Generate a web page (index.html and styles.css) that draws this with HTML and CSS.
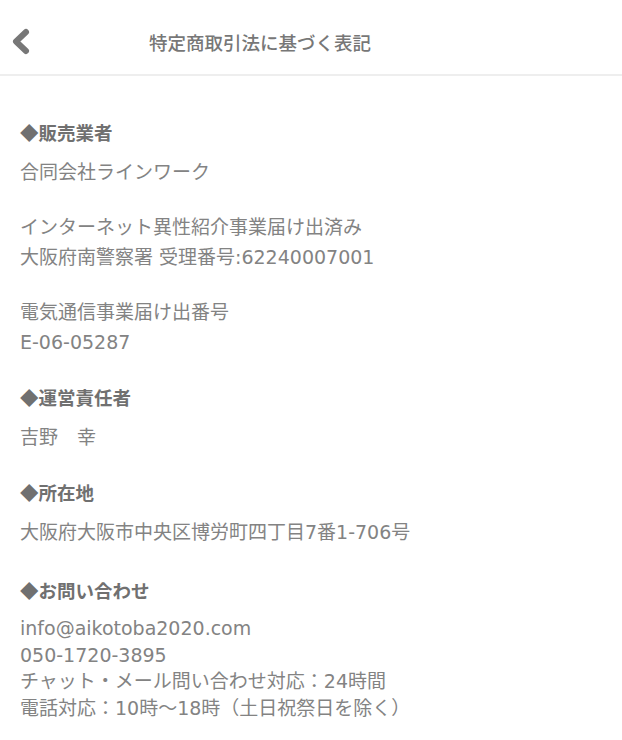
FILE: index.html
```html
<!DOCTYPE html>
<html lang="ja">
<head>
    <meta charset="UTF-8">
    <meta name="viewport" content="width=device-width, initial-scale=1.0">
    <title>特定商取引法に基づく表記</title>
    <link rel="stylesheet" href="styles.css">
</head>
<body>
    <header class="page-header">
        <a class="back-button" href="#">
            <svg width="44" height="74" viewBox="0 0 44 74">
                <polyline points="26,32 16,41.5 26,51" fill="none" stroke="#777" stroke-width="6" stroke-linecap="round" stroke-linejoin="round"/>
            </svg>
        </a>
        <h1 class="page-title">特定商取引法に基づく表記</h1>
    </header>

    <main class="content">
        <section class="block">
            <h2 class="block-title">◆販売業者</h2>
            <p>合同会社ラインワーク</p>
            <p>インターネット異性紹介事業届け出済み<br>大阪府南警察署 受理番号:62240007001</p>
            <p>電気通信事業届け出番号<br>E-06-05287</p>
        </section>

        <section class="block">
            <h2 class="block-title">◆運営責任者</h2>
            <p>吉野　幸</p>
        </section>

        <section class="block">
            <h2 class="block-title">◆所在地</h2>
            <p>大阪府大阪市中央区博労町四丁目7番1-706号</p>
        </section>

        <section class="block">
            <h2 class="block-title">◆お問い合わせ</h2>
            <p class="contact">info@aikotoba2020.com<br>050-1720-3895<br>チャット・メール問い合わせ対応：24時間<br>電話対応：10時〜18時（土日祝祭日を除く）</p>
        </section>
    </main>
</body>
</html>
```

FILE: styles.css
```css
body {
    font-family: "DejaVu Sans", "Noto Sans CJK JP", sans-serif;
    margin: 0;
    padding: 0;
    background: #fff;
    color: #838383;
}

.page-header {
    display: flex;
    align-items: center;
    height: 74px;
    border-bottom: 2px solid #eeeeee;
}

.back-button {
    display: block;
    width: 44px;
    height: 74px;
}

.back-button svg {
    display: block;
}

.page-title {
    margin: 0;
    padding: 10px 0 0 105px;
    font-family: "Noto Sans CJK JP", sans-serif;
    font-size: 18.5px;
    font-weight: 500;
    color: #777;
    line-height: 30px;
}

.content {
    padding: 41px 20px 0;
}

.block + .block {
    margin-top: 25px;
}

.block:last-child {
    margin-top: 28px;
}

.block-title {
    margin: 0 0 10px;
    font-family: "Noto Sans CJK JP", sans-serif;
    font-size: 18.5px;
    font-weight: bold;
    line-height: 30px;
    color: #707070;
}

.block p {
    margin: 0;
    font-size: 19px;
    line-height: 30px;
}

.block p + p {
    margin-top: 25px;
}

.block p.contact {
    margin-top: 1px;
    line-height: 26.5px;
}
```
